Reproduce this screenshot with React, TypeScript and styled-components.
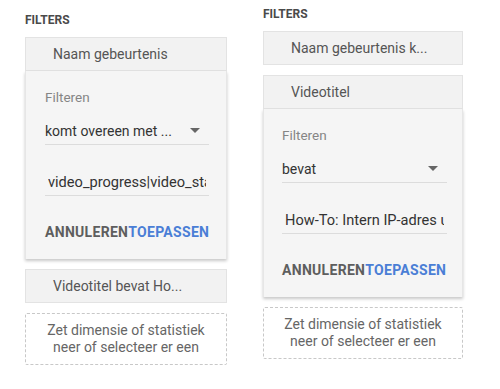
import React from "react";
import styled, { createGlobalStyle } from "styled-components";

const GlobalStyle = createGlobalStyle`
  body {
    margin: 0;
    background: #ffffff;
    font-family: Roboto, "Liberation Sans", Arial, sans-serif;
  }
`;

const Page = styled.div`
  display: flex;
  align-items: flex-start;
  width: 500px;
  height: 389px;
  background: #ffffff;
  overflow: hidden;
`;

const Column = styled.div<{ left: number; top: number; width: number }>`
  display: flex;
  flex-direction: column;
  width: ${(p) => p.width}px;
  margin-left: ${(p) => p.left}px;
  padding-top: ${(p) => p.top}px;
`;

const Heading = styled.div`
  font-size: 12px;
  line-height: 14px;
  font-weight: 700;
  color: #4a4a4a;
  margin-bottom: 10px;
`;

const Chip = styled.div<{ gap?: number }>`
  box-sizing: border-box;
  height: 34px;
  margin-bottom: ${(p) => p.gap ?? 10}px;
  padding-left: 27px;
  display: flex;
  align-items: center;
  background: #f2f2f2;
  border: 1px solid #e3e3e3;
  font-size: 14px;
  color: #555555;
  white-space: nowrap;
  overflow: hidden;
`;

const Panel = styled.div<{ inset: number }>`
  box-sizing: border-box;
  height: 188px;
  margin-bottom: 10px;
  padding: 16px ${(p) => p.inset}px 0 ${(p) => p.inset}px;
  background: #f5f5f5;
  border-left: 1px solid #e6e6e6;
  border-right: 1px solid #e6e6e6;
  box-shadow: 0 2px 3px rgba(0, 0, 0, 0.22);
  display: flex;
  flex-direction: column;
`;

const Label = styled.div`
  font-size: 13.5px;
  line-height: 20px;
  color: #858585;
  margin-bottom: 10px;
`;

const Field = styled.div<{ gap: number; width: number }>`
  box-sizing: border-box;
  width: ${(p) => p.width}px;
  height: 28px;
  margin-bottom: ${(p) => p.gap}px;
  display: flex;
  align-items: center;
  justify-content: space-between;
  border-bottom: 1px solid #dcdcdc;
  font-size: 14px;
  color: #333333;
  white-space: nowrap;
`;

const Arrow = styled.span`
  width: 0;
  height: 0;
  margin-right: 9px;
  border-left: 5px solid transparent;
  border-right: 5px solid transparent;
  border-top: 5px solid #666666;
`;

const InputText = styled.span`
  display: block;
  flex: 1;
  min-width: 0;
  margin: 0 3px;
  font-size: 14.6px;
  overflow: hidden;
  white-space: nowrap;
`;

const Actions = styled.div`
  display: flex;
  font-size: 14px;
  line-height: 16px;
  font-weight: 700;
  letter-spacing: 0.3px;
`;

const Action = styled.span<{ primary?: boolean }>`
  color: ${(p) => (p.primary ? "#4a7ed6" : "#5e5e5e")};
`;

const DropZone = styled.div`
  box-sizing: border-box;
  height: 52px;
  display: flex;
  align-items: center;
  justify-content: center;
  text-align: center;
  border: 1px dashed #c8c8c8;
  border-radius: 2px;
  font-size: 14px;
  line-height: 17px;
  color: #666666;
`;

type FilterColumnProps = {
  left: number;
  top: number;
  width: number;
  inset: number;
  fieldWidth: number;
  chips: string[];
  openChip: string;
  operator: string;
  value: string;
  after?: string;
};

function FilterColumn(props: FilterColumnProps) {
  return (
    <Column left={props.left} top={props.top} width={props.width}>
      <Heading>FILTERS</Heading>
      {props.chips.map((c) => (
        <Chip key={c}>{c}</Chip>
      ))}
      <Chip gap={0}>{props.openChip}</Chip>
      <Panel inset={props.inset}>
        <Label>Filteren</Label>
        <Field width={props.fieldWidth} gap={23}>
          <span>{props.operator}</span>
          <Arrow />
        </Field>
        <Field width={props.fieldWidth} gap={28}>
          <InputText>{props.value}</InputText>
        </Field>
        <Actions>
          <Action>ANNULEREN</Action>
          <Action primary>TOEPASSEN</Action>
        </Actions>
      </Panel>
      {props.after && <Chip>{props.after}</Chip>}
      <DropZone>
        Zet dimensie of statistiek
        <br />
        neer of selecteer er een
      </DropZone>
    </Column>
  );
}

export default function App() {
  return (
    <Page>
      <GlobalStyle />
      <FilterColumn
        left={25}
        top={13}
        width={202}
        inset={19}
        fieldWidth={164}
        chips={[]}
        openChip="Naam gebeurtenis"
        operator="komt overeen met ..."
        value="video_progress|video_start"
        after="Videotitel bevat Ho..."
      />
      <FilterColumn
        left={36}
        top={7}
        width={200}
        inset={18}
        fieldWidth={165}
        chips={["Naam gebeurtenis k..."]}
        openChip="Videotitel"
        operator="bevat"
        value="How-To: Intern IP-adres uitsluiten"
      />
    </Page>
  );
}
